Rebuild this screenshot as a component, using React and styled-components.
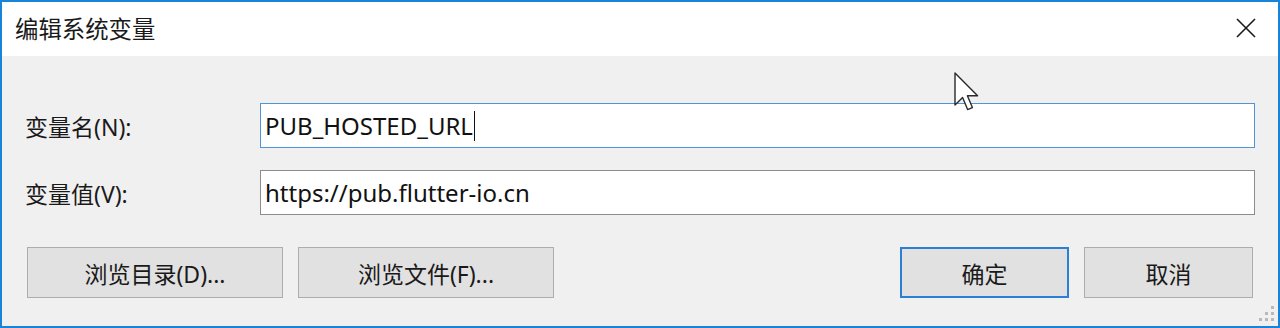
import React from 'react';
import styled, { createGlobalStyle } from 'styled-components';

const GlobalStyle = createGlobalStyle`
  body {
    margin: 0;
    background: #ffffff;
    font-family: "Segoe UI", "Noto Sans", "Noto Sans CJK SC", sans-serif;
  }
`;

const FONT = `"Segoe UI", "Noto Sans", "Noto Sans CJK SC", sans-serif`;

export default function App() {
  return (
    <>
      <GlobalStyle />
      <Window>
        <TitleBar>
          <Title>编辑系统变量</Title>
          <CloseButton aria-label="关闭">
            <svg width="20" height="20" viewBox="0 0 20 20">
              <path d="M1 1 L19 19 M19 1 L1 19" stroke="#1a1a1a" strokeWidth="1.6" fill="none" />
            </svg>
          </CloseButton>
        </TitleBar>
        <Body>
          <Form>
            <Label>变量名(N):</Label>
            <Field focused>
              PUB_HOSTED_URL<Caret />
            </Field>
            <Label>变量值(V):</Label>
            <Field>https://pub.flutter-io.cn</Field>
          </Form>
          <ButtonRow>
            <ButtonGroup>
              <Button wide>浏览目录(D)...</Button>
              <Button wide>浏览文件(F)...</Button>
            </ButtonGroup>
            <ButtonGroup>
              <Button primary>确定</Button>
              <Button>取消</Button>
            </ButtonGroup>
          </ButtonRow>
          <Grip>
            {[0, 1, 2, 3, 4, 5].map((i) => (
              <GripDot key={i} />
            ))}
          </Grip>
        </Body>
        <Pointer width="26" height="40" viewBox="0 0 13 20">
          <path
            d="M0.5 0.5 L0.5 16.5 L4.3 12.8 L6.8 18.8 L9.2 17.8 L6.7 11.9 L11.8 11.9 Z"
            fill="#ffffff"
            stroke="#2a2a2a"
            strokeWidth="0.7"
            strokeLinejoin="round"
          />
        </Pointer>
      </Window>
    </>
  );
}

const Window = styled.div`
  position: relative;
  width: 1280px;
  height: 328px;
  box-sizing: border-box;
  border: 2px solid #1883d7;
  display: flex;
  flex-direction: column;
  overflow: hidden;
`;

const TitleBar = styled.div`
  height: 54px;
  background: #ffffff;
  display: flex;
  align-items: center;
  justify-content: space-between;
  padding: 0 22px 0 13px;
`;

const Title = styled.div`
  font-family: ${FONT};
  font-size: 23.4px;
  color: #1a1a1a;
  margin-top: -2px;
`;

const CloseButton = styled.div`
  display: flex;
  align-items: center;
  margin-top: -3px;
`;

const Body = styled.div`
  position: relative;
  flex: 1;
  background: #f0f0f0;
  padding: 47px 23px 0 23px;
  display: flex;
  flex-direction: column;
`;

const Form = styled.div`
  display: grid;
  grid-template-columns: 235px 1fr;
  row-gap: 22px;
  align-items: center;
`;

const Label = styled.div`
  font-family: ${FONT};
  font-size: 23px;
  color: #1a1a1a;
  padding-top: 1px;
`;

const Field = styled.div`
  height: 45px;
  box-sizing: border-box;
  background: #ffffff;
  border: 1px solid ${(p) => (p.focused ? '#4f95dc' : '#8c8c8c')};
  display: flex;
  align-items: center;
  padding: 0 4px;
  font-family: ${FONT};
  font-size: 24px;
  color: #111111;
`;

const Caret = styled.span`
  display: inline-block;
  width: 1px;
  height: 30px;
  background: #111111;
  margin-left: 1px;
`;

const ButtonRow = styled.div`
  display: flex;
  justify-content: space-between;
  margin-top: 32px;
  padding-left: 2px;
  padding-right: 2px;
`;

const ButtonGroup = styled.div`
  display: flex;
  gap: 15px;
`;

const Button = styled.div`
  width: ${(p) => (p.wide ? '256px' : '169px')};
  height: 51px;
  box-sizing: border-box;
  background: #e1e1e1;
  border: ${(p) => (p.primary ? '2px solid #2b7fd4' : '1px solid #adadad')};
  display: flex;
  align-items: center;
  justify-content: center;
  font-family: ${FONT};
  font-size: 23px;
  color: #1a1a1a;
`;

const Grip = styled.div`
  position: absolute;
  right: 3px;
  bottom: 4px;
  width: 16px;
  height: 16px;
  display: grid;
  grid-template-columns: repeat(3, 3px);
  grid-template-rows: repeat(3, 3px);
  gap: 3px;
  & > :nth-child(1) { grid-column: 3; grid-row: 1; }
  & > :nth-child(2) { grid-column: 2; grid-row: 2; }
  & > :nth-child(3) { grid-column: 3; grid-row: 2; }
  & > :nth-child(4) { grid-column: 1; grid-row: 3; }
  & > :nth-child(5) { grid-column: 2; grid-row: 3; }
  & > :nth-child(6) { grid-column: 3; grid-row: 3; }
`;

const GripDot = styled.span`
  width: 3px;
  height: 3px;
  background: #b9b9b9;
`;

const Pointer = styled.svg`
  position: absolute;
  left: 952px;
  top: 70px;
`;
